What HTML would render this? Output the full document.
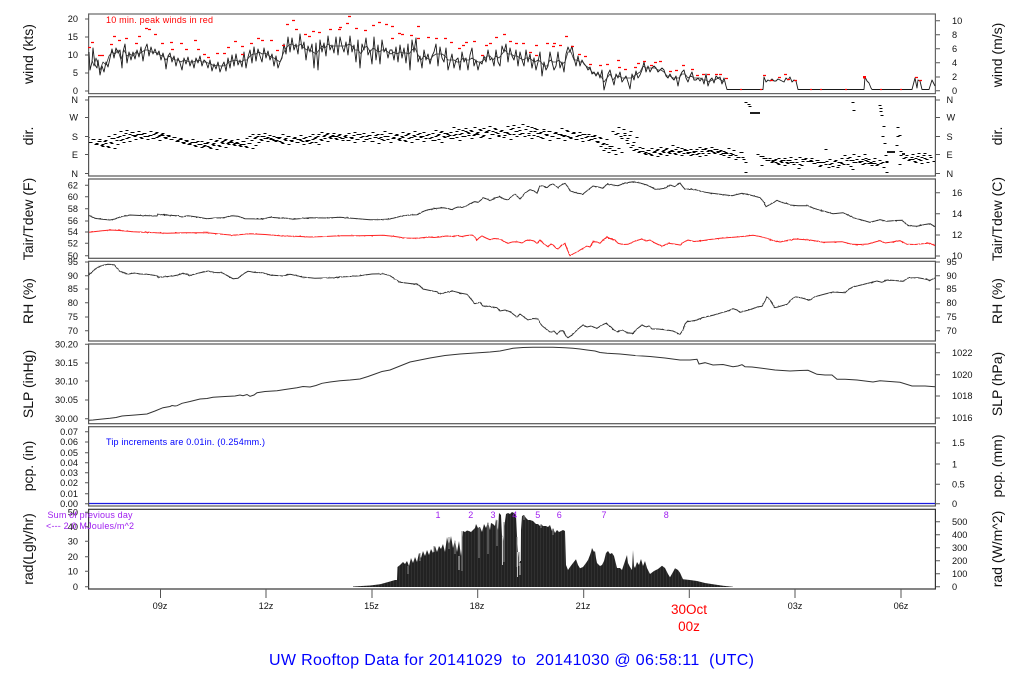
<!DOCTYPE html>
<html><head><meta charset="utf-8"><title>UW Rooftop Data</title>
<style>html,body{margin:0;padding:0;background:#fff}svg{display:block}text{font-family:"Liberation Sans",sans-serif}</style></head>
<body>
<svg width="1024" height="700" viewBox="0 0 1024 700" xmlns="http://www.w3.org/2000/svg">
<defs>
<filter id="jit" filterUnits="userSpaceOnUse" x="80" y="170" width="870" height="180">
<feTurbulence type="fractalNoise" baseFrequency="0.45" numOctaves="1" seed="4" result="n"/>
<feDisplacementMap in="SourceGraphic" in2="n" scale="1.5" xChannelSelector="R" yChannelSelector="G"/>
</filter>
<pattern id="stripes" width="3" height="10" patternUnits="userSpaceOnUse">
<rect width="3" height="10" fill="#222"/><rect width="1" height="10" fill="#303030"/>
</pattern>
<clipPath id="dc"><rect x="89" y="97" width="846" height="79"/></clipPath>
</defs>
<rect width="1024" height="700" fill="#fff"/>

<!-- frames -->
<g fill="none" stroke="#555" stroke-width="1.2">
<rect x="88.6" y="14" width="846.8" height="79.6" stroke="#666"/>
<rect x="88.6" y="96.7" width="846.8" height="79.3"/>
<rect x="88.6" y="179" width="846.8" height="79.3"/>
<rect x="88.6" y="261.3" width="846.8" height="79.7"/>
<rect x="88.6" y="344" width="846.8" height="79.7"/>
<rect x="88.6" y="426.7" width="846.8" height="79.3"/>
<rect x="88.6" y="509.3" width="846.8" height="79.7" stroke="#333"/>
</g>

<!-- tick marks -->
<path fill="none" stroke="#555" stroke-width="1" d="
M85 19h4M85 37h4M85 55h4M85 73h4M85 91h4
M936 20.7h4M936 34.7h4M936 48.7h4M936 62.7h4M936 77h4M936 90.7h4
M85 100h4M85 117.5h4M85 136.5h4M85 154.5h4M85 173.5h4
M936 100h4M936 117.5h4M936 136.5h4M936 154.5h4M936 173.5h4
M85 185.3h4M85 196.7h4M85 208.7h4M85 221h4M85 232h4M85 243.3h4M85 255.7h4
M936 192.7h4M936 213.7h4M936 235h4M936 256h4
M85 262h4M85 275.7h4M85 289h4M85 302.7h4M85 317h4M85 330.7h4
M936 262h4M936 275.7h4M936 289h4M936 302.7h4M936 317h4M936 330.7h4
M85 344.3h4M85 363h4M85 381h4M85 400h4M85 418.7h4
M936 352.7h4M936 374.7h4M936 396h4M936 418h4
M85 431.7h4M85 442h4M85 452.7h4M85 462.7h4M85 472.7h4M85 482.7h4M85 493.7h4M85 503.7h4
M936 443h4M936 464h4M936 484.3h4M936 503.7h4
M85 512.3h4M85 526.7h4M85 541.3h4M85 556.7h4M85 571.3h4M85 586.7h4
M936 521.7h4M936 534.7h4M936 547.7h4M936 560.7h4M936 573.7h4M936 586.7h4
M160.5 589v9M266 589v9M372 589v9M477.7 589v9M583.7 589v9M689.3 589v9M795 589v9M901 589v9"/>

<!-- wind -->
<polyline id="wnd" fill="none" stroke="#1a1a1a" stroke-width="0.9" stroke-linejoin="round" points="89,52 90,70 92,62 93,48 95,65 97,68 98,60 100,75 102,66 104,72 106,62 108,67 110,58 112,49 114,58 116,48 118,53 120,50 122,68 123,52 125,44 127,63 129,52 131,60 133,52 135,59 137,50 139,57 141,47 143,61 145,49 147,44 149,56 151,47 153,54 155,49 157,55 159,51 161,60 163,53 165,61 166,69 168,56 170,53 172,62 174,56 176,66 178,58 180,63 182,70 184,58 186,64 188,57 190,66 192,60 194,68 196,58 198,63 200,56 202,66 204,60 206,62 208,68 210,60 212,71 214,64 216,69 218,62 220,72 222,66 224,62 226,71 228,58 230,68 232,55 234,66 236,54 238,65 240,60 242,67 244,52 246,68 248,57 250,50 252,63 254,47 256,61 258,49 260,56 262,62 264,48 266,58 268,51 270,60 272,54 274,66 276,56 278,68 280,62 282,58 284,44 286,54 288,37 290,52 292,38 294,50 296,44 298,54 300,34 302,49 304,42 306,60 308,46 310,52 312,44 314,68 316,43 318,70 320,40 322,52 324,43 326,56 328,36 330,50 332,45 334,53 336,37 338,55 340,37 342,46 344,52 346,42 348,55 350,36 352,52 354,45 356,62 358,40 360,68 362,44 364,50 366,38 368,55 370,50 372,64 374,37 376,60 378,45 380,64 382,40 384,52 386,48 388,58 390,50 392,50 394,60 396,47 398,62 400,45 402,58 404,48 406,63 408,44 410,70 412,40 414,52 416,38 418,62 420,56 422,68 424,50 426,60 428,54 430,64 432,56 434,52 436,44 438,66 440,47 442,58 444,62 446,48 448,70 450,62 452,54 454,68 456,60 458,58 460,70 462,52 464,62 466,58 468,70 470,55 472,48 474,66 476,60 478,70 480,62 482,64 484,56 486,62 488,50 490,60 492,58 494,66 496,50 498,62 500,66 502,46 504,52 506,44 508,62 510,48 512,56 514,60 516,50 518,66 520,52 522,60 524,66 526,50 528,62 530,54 532,68 534,58 536,70 538,62 540,52 542,76 544,62 546,70 548,66 550,52 552,62 554,70 556,66 558,52 560,68 562,62 564,72 566,54 568,47 570,52 572,46 574,58 576,66 578,56 580,66 582,60 584,64 586,66 588,70 590,67 592,74 594,72 596,76 598,72 600,78 602,70 604,90 606,82 608,74 610,70 612,78 614,85 616,74 618,78 620,72 622,82 624,79 626,76 628,82 630,89 632,74 634,80 636,71 638,78 640,75 642,70 644,62 646,72 648,66 650,72 652,68 654,66 656,68 658,72 660,70 662,68 664,70 666,76 668,78 670,74 672,78 674,80 676,76 678,86 680,76 682,72 684,70 686,78 688,82 690,76 692,72 694,80 696,80 698,78 700,81 702,78 704,84 706,74 708,86 710,80 712,78 714,83 716,76 718,78 720,77 722,84 724,78 726,86 727,89.5 763,89.5 764,77 766,82 768,80 770,81 772,79 774,81 776,81 778,79 780,80 782,81 784,82 786,78 788,80 790,77 792,82 794,80 796,81 798,89.5 864,89.5 865,77 867,81 869,83 871,88 872,89.5 912,89.5 915,78 917,88 918,80 920,81 922,89.5 929,89.5 932,80 935,86"/>
<path fill="none" stroke="#333" stroke-width="0.8" stroke-linejoin="round" d="M92 60L94 66 96 58 98 64 100 70 103 62 106 65 109 56 112 52 115 54 118 50 121 60 124 50 127 56 130 54 133 56 136 52 139 54 142 52 145 50 148 50 151 52 154 52 157 53 160 55 163 56 166 60 169 56 172 58 175 60 178 60 181 62 184 60 187 61 190 62 193 62 196 61 199 60 202 62 205 62 208 63 211 64 214 66 217 65 220 66 223 66 226 65 229 62 232 61 235 60 238 61 241 62 244 60 247 60 250 56 253 54 256 54 259 52 262 54 265 53 268 55 271 57 274 58 277 60 280 62 283 54 286 48 289 45 292 44 295 46 298 46 301 44 304 48 307 50 310 50 313 52 316 54 319 50 322 46 325 48 328 44 331 46 334 46 337 46 340 46 343 46 346 46 349 44 352 46 355 50 358 50 361 54 364 48 367 46 370 52 373 48 376 50 379 52 382 50 385 50 388 52 391 54 394 52 397 54 400 52 403 53 406 53 409 54 412 50 415 48 418 55 421 60 424 56 427 58 430 60 433 56 436 54 439 54 442 54 445 56 448 60 451 60 454 60 457 62 460 62 463 58 466 60 469 60 472 58 475 60 478 62 481 62 484 60 487 56 490 56 493 60 496 56 499 58 502 54 505 50 508 54 511 54 514 56 517 56 520 58 523 60 526 58 529 58 532 60 535 62 538 60 541 62 544 66 547 66 550 60 553 62 556 62 559 60 562 64 565 62 568 52 571 52 574 60 577 60 580 62 583 62 586 66 589 68 592 72 595 74 598 74 601 76 604 82 607 78 610 74 613 80 616 76 619 76 622 78 625 78 628 78 631 78 634 76 637 74 640 72 643 66 646 68 649 68 652 68 655 68 658 70 661 70 664 72 667 76 670 76 673 78 676 78 679 78 682 74 685 74 688 78 691 76 694 78 697 78 700 78 703 80 706 80 709 82 712 80 715 80 718 78 721 80 724 82"/>
<g transform="translate(0,.5)">
<path fill="none" stroke="#f00" stroke-width="1.2" d="M88 47h3M91 42h3M98 55h3M101 55h3M110 44h3M113 36h3M118 40h3M125 38h3M135 43h3M138 36h3M145 28h3M148 29h3M154 34h3M161 43h3M170 42h3M171 49h3M180 43h3M185 49h3M194 40h3M197 49h3M203 54h3M207 57h3M216 53h3M223 53h3M227 47h3M234 41h3M241 46h3M241 54h3M250 43h3M257 38h3M261 40h3M270 40h3M276 50h3M282 45h3M286 24h3M292 20h3M295 29h3M304 34h3M308 36h3M312 31h3M318 32h3M329 29h3M338 29h3M339 27h3M346 23h3M348 16h3M355 28h3M364 30h3M372 25h3M378 22h3M385 24h3M391 26h3M391 38h3M398 33h3M401 34h3M410 35h3M417 26h3M417 38h3M427 37h3M435 38h3M444 38h3M450 42h3M458 48h3M462 45h3M465 42h3M473 41h3M481 55h3M485 45h3M489 43h3M495 37h3M503 34h3M509 41h3M515 43h3M522 43h3M529 52h3M535 45h3M535 55h3M546 43h3M552 46h3M553 43h3M559 45h3M565 36h3M571 46h3M578 54h3M584 56h3M589 64h3M599 65h3M606 64h3M617 60h3M618 67h3M624 69h3M634 67h3M637 63h3M643 61h3M650 65h3M654 62h3M659 61h3M669 71h3M675 70h3M682 65h3M691 69h3M696 75h3M702 74h3M707 74h3M715 74h3M719 74h3M725 78h3M763 75h3M770 80h3M778 77h3M784 74h3M787 79h3M794 80h3M915 77h3M919 80h3M740 89h2M760 89h2M810 89h2M820 89h2M845 89h2M880 89h2M900 89h2"/>
</g>
<rect x="863" y="76" width="3" height="2.5" fill="#f00"/>

<!-- direction -->
<g clip-path="url(#dc)">
<g transform="translate(0,.5)">
<path id="dirband" fill="none" stroke="#000" stroke-width="1" stroke-linecap="square" d="M89 142h2M92 139h2M95 144h2M98 141h2M101 145h2M104 141h2M107 146h2M110 142h2M113 138h2M116 140h2M119 136h2M122 139h2M125 133h2M128 137h2M131 132h2M134 136h2M137 134h2M140 137h2M143 133h2M146 136h2M149 135h2M152 138h2M155 133h2M158 136h2M161 134h2M164 137h2M167 135h2M170 139h2M173 137h2M176 141h2M179 139h2M182 142h2M185 140h2M188 144h2M191 142h2M194 145h2M197 141h2M200 144h2M203 146h2M206 143h2M209 147h2M212 144h2M215 141h2M218 145h2M221 142h2M224 140h2M227 143h2M230 141h2M233 144h2M236 142h2M239 145h2M242 141h2M245 146h2M248 143h2M251 140h2M254 138h2M257 136h2M260 139h2M263 136h2M266 138h2M269 135h2M272 139h2M275 141h2M278 138h2M281 142h2M284 139h2M287 136h2M290 140h2M293 138h2M296 142h2M299 139h2M302 141h2M305 137h2M308 140h2M311 142h2M314 138h2M317 136h2M320 139h2M323 136h2M326 134h2M329 137h2M332 135h2M335 138h2M338 135h2M341 138h2M344 136h2M347 140h2M350 137h2M353 135h2M356 139h2M359 134h2M362 136h2M365 139h2M368 135h2M371 141h2M374 137h2M377 134h2M380 137h2M383 140h2M386 136h2M389 133h2M392 138h2M395 135h2M398 139h2M401 136h2M404 140h2M407 134h2M410 137h2M413 135h2M416 139h2M419 133h2M422 136h2M425 138h2M428 134h2M431 137h2M434 140h2M437 135h2M440 132h2M443 136h2M446 133h2M449 135h2M452 138h2M455 134h2M458 129h2M461 133h2M464 136h2M467 132h2M470 130h2M473 135h2M476 133h2M479 129h2M482 136h2M485 132h2M488 130h2M491 134h2M494 128h2M497 133h2M500 131h2M503 137h2M506 132h2M509 134h2M512 128h2M515 131h2M518 127h2M521 133h2M524 136h2M527 126h2M530 131h2M533 135h2M536 129h2M539 133h2M542 138h2M545 134h2M548 131h2M551 136h2M554 133h2M557 138h2M560 134h2M563 136h2M566 130h2M569 137h2M572 133h2M575 139h2M578 135h2M581 138h2M584 134h2M587 136h2M590 139h2M593 136h2M596 141h2M599 137h2M602 144h2M605 148h2M608 152h2M611 146h2M614 150h2M617 133h2M620 136h2M623 129h2M626 140h2M629 135h2M632 145h2M635 149h2M638 152h2M641 151h2M644 153h2M647 150h2M650 154h2M653 152h2M656 150h2M659 153h2M662 151h2M665 149h2M668 152h2M671 150h2M674 153h2M677 147h2M680 151h2M683 153h2M686 150h2M689 152h2M692 154h2M695 151h2M698 153h2M701 151h2M704 149h2M707 151h2M710 150h2M713 152h2M716 149h2M719 151h2M722 153h2M725 152h2M728 157h2M730 155h2M733 150h2M735 155h2M762 156h2M765 158h2M768 160h2M771 162h2M774 160h2M777 163h2M780 161h2M783 160h2M786 162h2M789 160h2M792 162h2M795 159h2M804 159h2M807 161h2M810 160h2M813 163h2M816 160h2M822 162h2M825 164h2M831 163h2M834 161h2M840 162h2M843 164h2M846 160h2M849 157h2M852 160h2M855 162h2M858 156h2M861 161h2M864 163h2M867 161h2M870 162h2M873 161h2M876 165h2M879 160h2M905 157h2M908 160h2M911 157h2M914 161h2M917 156h2M920 160h2M923 155h2M926 159h2M929 155h2"/>
<use href="#dirband" transform="translate(7,2)"/>
<use href="#dirband" transform="translate(-5,-2)"/>
<path fill="none" stroke="#000" stroke-width="1" stroke-linecap="square" d="M738 157h2M741 152h2M743 159h2M745 162h2M745 172h2M745 102h2M748 104h2M749 106h2M761 165h2M798 168h2M801 165h2M819 166h2M825 149h2M828 167h2M837 167h2M852 169h2M864 154h2M882 162h2M885 155h2M852 102h2M853 110h2M879 105h2M880 108h2M880 111h2M881 115h2M883 126h2M882 136h2M884 143h2M886 172h2M886 161h2M897 127h2M897 136h2M899 135h2M896 145h2M900 151h2M899 164h2"/>
</g>
</g>
<path fill="none" stroke="#000" stroke-width="1.8" d="M750 113h10M887 152h8M902 154h3"/>

<!-- Tair -->
<g filter="url(#jit)">
<polyline fill="none" stroke="#333" stroke-width="1" points="89,215 92,217 95,218.3 100,219 110,220 115,219 120,217 125,216 130,215 140,215.5 150,215.7 157,216 158,214.3 165,215 177,215.7 182,217 188,215.7 197,217 207,218.7 215,218 223,217.7 232,215.7 238,216.3 245,218.7 263,219 270,217.3 280,218 287,218.3 293,219.3 310,217.7 327,218 340,217.3 355,218.5 370,219.7 380,219.6 390,219 396,217.5 403,215.7 410,215 417,214.7 422,212 427,210 435,208.5 443,207.7 448,208.5 452,209.7 455,208 458,207 462,207.5 467,205.7 471,203 475,201.7 478,202.3 481,200 483,197.7 487,199 490,200.7 495,198 500,196.7 504,199 508,200 512,196 515,194.3 518,197 520,199 525,193 530,189.7 534,191 537,193.3 539,188 540,185.7 543,186 547,187.7 550,185 553,184 556,186 558,187.7 561,185 565,183.3 568,187 570,190.7 576,193 583,194 588,190 593,186 598,187 603,188.3 606,185 608,184 613,185 618,185.7 625,183 633,181.7 640,183 647,185 651,187 655,189.3 660,189 665,188.3 670,185 675,186.7 678,184 680,183 683,187 685,189.3 690,189 697,190 702,191.7 710,193 720,194.3 726,195 732,195.7 737,194.5 742,193.3 750,195 760,197.7 763,201 766,206.7 771,204 777,200.3 783,203 787,203.5 790,205 798,205.7 808,205.7 813,208 817,209.3 825,211.5 833,213.7 843,212.7 848,215 853,217.7 860,219.5 870,222.3 875,221 880,219.7 887,221.3 895,220.5 902,220.3 905,223 908,225.7 917,226.3 925,224.5 930,223.7 935,226.7"/>
<polyline fill="none" stroke="#f22" stroke-width="1" points="89,232.3 100,231 110,230 120,230.5 133,231.7 150,232.5 167,233.3 185,232.7 207,232.7 220,234 233,235.3 250,233.7 265,234.5 283,236 295,236.3 310,237 325,236.5 340,235.7 360,235.7 383,235.3 395,236.5 405,238 412,238.3 420,238 428,237 434,237.5 440,237 446,236 452,236.5 457,235.7 462,236.5 467,235.5 472,235 474,236 477,240 479,238 482,236 486,238 490,239.7 494,238.5 500,239 504,241.5 508,243.3 512,242 517,241.7 522,243 526,240.5 530,240 534,241 537,243.3 540,240 544,244 548,246.7 551,244 553,245 556,248 558,249 561,246 565,243.3 567,249 570,255.7 575,253 583,248.3 587,246 590,247 593,241.7 597,242 600,243.3 603,240 607,237 611,239 615,240 618,243.3 623,244.5 628,244.3 635,241 642,239 646,241 650,240 655,243 662,246.3 668,243.3 674,244 680,245 684,242 688,240 694,241.5 700,241 710,239.5 720,238.3 730,237.5 740,236.7 753,235.3 760,236.5 767,238.3 773,240.5 780,242 787,240.5 795,239 810,240 816,241 823,242.3 832,242 842,241.7 847,243 852,244.3 860,244.5 868,244 875,242 880,240.7 885,243 892,242 900,240.7 907,244.3 915,244.5 925,243.5 930,243.3 935,245.7"/>

<!-- RH -->
<polyline fill="none" stroke="#333" stroke-width="1" points="89,275 93,271 97,267.7 102,265.5 108,264.3 112,264.5 115,265.7 119,270.7 123,272.5 128,274 135,273 140,274 147,274.3 152,275 157,275.7 158,277.3 165,276.8 173,276 178,275 183,273.3 190,275.3 199,273 208,271 215,272.5 222,272.7 228,276 233,278.7 238,278.3 243,274 248,271.3 255,272.5 263,272.7 270,275 283,276 290,274.3 296,275.5 302,277 315,278.3 333,277.7 340,277 350,276.5 360,275.7 365,275 372,274 383,273.7 390,275.7 395,279 400,282.3 410,283.5 418,284.3 423,289 430,290.5 437,291.7 440,294 447,292 453,291 460,293 467,294.3 471,299 475,303.7 480,302.3 483,306 490,306.5 497,307.7 500,311 505,310 510,311.7 513,314 517,317 520,314 524,317 528,320 533,318.5 538,319 540,323 542,325.7 546,329 550,332 554,331 557,334.3 560,331 563,330.7 566,336 568,337.7 572,335 578,329 583,325 587,327 591,326 597,328.3 602,325 606,323.3 611,327 614,330 617,331.7 622,330 628,333 633,333.3 637,329 642,325 646,327 649,326 652,329 658,329 667,330 673,331 680,334.3 683,330 685,324 687,321.7 692,321 697,320 702,317.7 712,315.5 723,312.3 728,311 733,308.7 737,310 740,312.3 745,311 752,309 757,307 762,306.3 764,303 767,296.7 770,300 773,305 775,307.7 781,306 787,304.3 791,300 795,296.7 802,298 810,300.3 813,298 815,296.7 825,294 833,292 845,292.7 849,289 853,287 865,284 877,281 882,282.3 887,280 895,280.5 903,281.3 908,278 918,277.7 925,279 930,280.3 935,278"/>
</g>

<!-- SLP -->
<polyline fill="none" stroke="#333" stroke-width="1" points="89,420.3 93,420 100,419.3 110,418.3 116,417.5 122,416 135,415 147,414 155,411 163,407.7 170,406.5 172,405.5 175,406 177,405.7 182,403.3 190,401.5 200,399 207,398.5 213,397.3 225,396.5 235,396 240,395 243,395.7 247,394.5 250,396.3 254,395 257,392.7 265,391.5 277,390.7 285,389.5 297,387.7 303,386.5 310,387 316,385.5 322,383.3 330,382 340,380.7 350,380 360,379 368,376.5 375,374 382,371.5 390,370 400,366 410,362 420,360 430,358 445,355.5 460,354 475,353 490,352 500,351 513,348.3 523,347.5 533,347.3 553,347.3 565,347.8 573,348.3 580,349 587,350 595,351 600,352.5 607,353.3 620,354 635,355.5 650,356.5 665,358 680,360 690,360 697,359.3 699,364 705,362.7 713,365 723,364.5 733,366.7 738,366 742,364.7 745,366.7 752,367 760,368 775,370 790,371 800,370.5 808,370.3 813,372.5 817,374.3 825,375 832,375 837,379.3 845,379.3 857,380 873,382 880,380.7 890,381.5 900,382.3 912,386 925,386 935,386.7"/>

<!-- pcp line -->
<path d="M89 503.5H935" stroke="#1a1ae0" stroke-width="1.2"/>

<!-- radiation -->
<polygon fill="url(#stripes)" points="353,586.5 370,585.5 380,584.3 390,581.5 395,580 397,580 397.5,567 400,565 403,562 405,564 407,561 409,566 411,558 413,563 415,557 417,562 419,553 421,558 423,551 425,556 427,550 429,555 431,549 433,553 435,546 437,552 439,546 441,549 443,544 445,552 447,537 449,546 451,536 453,548 455,540 457,552 459,541 461,556 463,531 465,532 467,530.5 469,531 471,532 473,530 475,528 476,524 478,528 480,527 482,532 484,524 486,528 488,522 490,530 491,523 493,524 495,526 496,519 498,530 499,513 501,515 502,535 503,541 505,521 506,514 508,513 510,514 512,512 514,513 516,515 517,536 518,552 519,563 520,562 521,530 522,516 524,515 526,518 528,520 530,520 533,521 536,524 538,524 540,526 541,524 543,526 546,526 548,527 550,525 552,531 553,528 555,533 557,530 559,532 561,531 563,530 565,531 566,565 568,570 570,567 573,563 576,559.3 578,565 580,568.3 583,567 586,563 588,560 590,555 591,552 592,548 594,552 595,551 596,558 597,563 600,566 602,565 604,561 606,553 608,551 610,554 612,553 614,556 615,560 617,568 620,568 622,570 624,564 626,558 627,555 628,563 630,567 632,570 633,550 634,566 635,568 637,562 639,565 641,559 643,566 645,561 647,568 650,574 654,571 658,569 662,565.7 665,568 668,574 670,577.3 673,572 675,568.3 678,570 680,572.7 683,579.3 690,580 697,581 705,583 713,584.3 723,585.7 733,586.7 733,587 353,587"/>
<path fill="none" stroke="#888" stroke-width="1" d="M449 537v12M455 541v13M479 528v30M488 524v30M497 520v26M504 522v40M517 537v30M519 552v14M524 516v4M541 524v4M553 530v5M408 566v8M420 553v8M434 546v6M462 531v40"/>
<path fill="none" stroke="#fff" stroke-width="1" opacity=".75" d="M502.5 537v28M517.5 552v25M520 563v12M520.5 531v30M459 556v14"/>

<!-- tick labels -->
<g font-size="9.2" fill="#111" text-anchor="end">
<text x="78" y="22">20</text><text x="78" y="40">15</text><text x="78" y="58">10</text><text x="78" y="76">5</text><text x="78" y="94">0</text>
<text x="78" y="103">N</text><text x="78" y="120.5">W</text><text x="78" y="140">S</text><text x="78" y="158">E</text><text x="78" y="177">N</text>
<text x="78" y="188.5">62</text><text x="78" y="200">60</text><text x="78" y="212">58</text><text x="78" y="224">56</text><text x="78" y="235">54</text><text x="78" y="246.5">52</text><text x="78" y="259">50</text>
<text x="78" y="265">95</text><text x="78" y="279">90</text><text x="78" y="292">85</text><text x="78" y="306">80</text><text x="78" y="320">75</text><text x="78" y="334">70</text>
<text x="78" y="347.5">30.20</text><text x="78" y="366">30.15</text><text x="78" y="384.5">30.10</text><text x="78" y="403">30.05</text><text x="78" y="422">30.00</text>
<text x="78" y="435">0.07</text><text x="78" y="445">0.06</text><text x="78" y="456">0.05</text><text x="78" y="466">0.04</text><text x="78" y="476">0.03</text><text x="78" y="486">0.02</text><text x="78" y="497">0.01</text><text x="78" y="507">0.00</text>
<text x="78" y="515.5">50</text><text x="78" y="530">40</text><text x="78" y="544.5">30</text><text x="78" y="560">20</text><text x="78" y="574.5">10</text><text x="78" y="590">0</text>
</g>
<g font-size="9.2" fill="#111">
<text x="952" y="24">10</text><text x="952" y="38">8</text><text x="952" y="52">6</text><text x="952" y="66">4</text><text x="952" y="80">2</text><text x="952" y="94">0</text>
<text x="946.5" y="103">N</text><text x="946.5" y="120.5">W</text><text x="946.5" y="140">S</text><text x="946.5" y="158">E</text><text x="946.5" y="177">N</text>
<text x="952" y="196">16</text><text x="952" y="217">14</text><text x="952" y="238">12</text><text x="952" y="259">10</text>
<text x="946.5" y="265">95</text><text x="946.5" y="279">90</text><text x="946.5" y="292">85</text><text x="946.5" y="306">80</text><text x="946.5" y="320">75</text><text x="946.5" y="334">70</text>
<text x="952" y="356">1022</text><text x="952" y="378">1020</text><text x="952" y="399">1018</text><text x="952" y="421">1016</text>
<text x="952" y="446">1.5</text><text x="952" y="467.5">1</text><text x="952" y="487.5">0.5</text><text x="952" y="507">0</text>
<text x="952" y="525">500</text><text x="952" y="538">400</text><text x="952" y="551">300</text><text x="952" y="564">200</text><text x="952" y="577">100</text><text x="952" y="590">0</text>
</g>
<g font-size="9.2" fill="#111" text-anchor="middle">
<text x="160" y="609">09z</text><text x="266" y="609">12z</text><text x="371.5" y="609">15z</text><text x="477" y="609">18z</text><text x="583" y="609">21z</text><text x="795" y="609">03z</text><text x="901" y="609">06z</text>
</g>

<!-- axis titles -->
<g font-size="14" fill="#111" text-anchor="middle">
<text transform="translate(33,54) rotate(-90)">wind (kts)</text>
<text transform="translate(33,136) rotate(-90)">dir.</text>
<text transform="translate(33,219) rotate(-90)">Tair/Tdew (F)</text>
<text transform="translate(33,301) rotate(-90)">RH (%)</text>
<text transform="translate(33,384) rotate(-90)">SLP (inHg)</text>
<text transform="translate(33,466) rotate(-90)">pcp. (in)</text>
<text transform="translate(33,549) rotate(-90)">rad(Lgly/hr)</text>
<text transform="translate(1002,55) rotate(-90)">wind (m/s)</text>
<text transform="translate(1002,136) rotate(-90)">dir.</text>
<text transform="translate(1002,219) rotate(-90)">Tair/Tdew (C)</text>
<text transform="translate(1002,301) rotate(-90)">RH (%)</text>
<text transform="translate(1002,384) rotate(-90)">SLP (hPa)</text>
<text transform="translate(1002,466) rotate(-90)">pcp. (mm)</text>
<text transform="translate(1002,549) rotate(-90)">rad (W/m^2)</text>
</g>

<!-- annotations -->
<text x="106" y="23" font-size="9" fill="#f00" textLength="107">10 min. peak winds in red</text>
<text x="106" y="445" font-size="9" fill="#00f" textLength="159">Tip increments are 0.01in. (0.254mm.)</text>
<text x="47.5" y="518" font-size="9" fill="#a020f0" textLength="85">Sum of previous day</text>
<text x="46" y="529" font-size="9" fill="#a020f0" textLength="88">&lt;--- 2.0 MJoules/m^2</text>
<g font-size="9" fill="#a020f0" text-anchor="middle">
<text x="438" y="518">1</text><text x="470.7" y="518">2</text><text x="493" y="518">3</text><text x="514.7" y="518">4</text><text x="537.7" y="518">5</text><text x="559.3" y="518">6</text><text x="604" y="518">7</text><text x="666.3" y="518">8</text>
</g>
<g font-size="13.5" fill="#f00" text-anchor="middle">
<text x="689" y="614">30Oct</text><text x="689" y="631">00z</text>
</g>
<text x="269" y="665" font-size="16" fill="#00f" textLength="485" xml:space="preserve" style="white-space:pre">UW Rooftop Data for 20141029  to  20141030 @ 06:58:11  (UTC)</text>
</svg>
</body></html>
